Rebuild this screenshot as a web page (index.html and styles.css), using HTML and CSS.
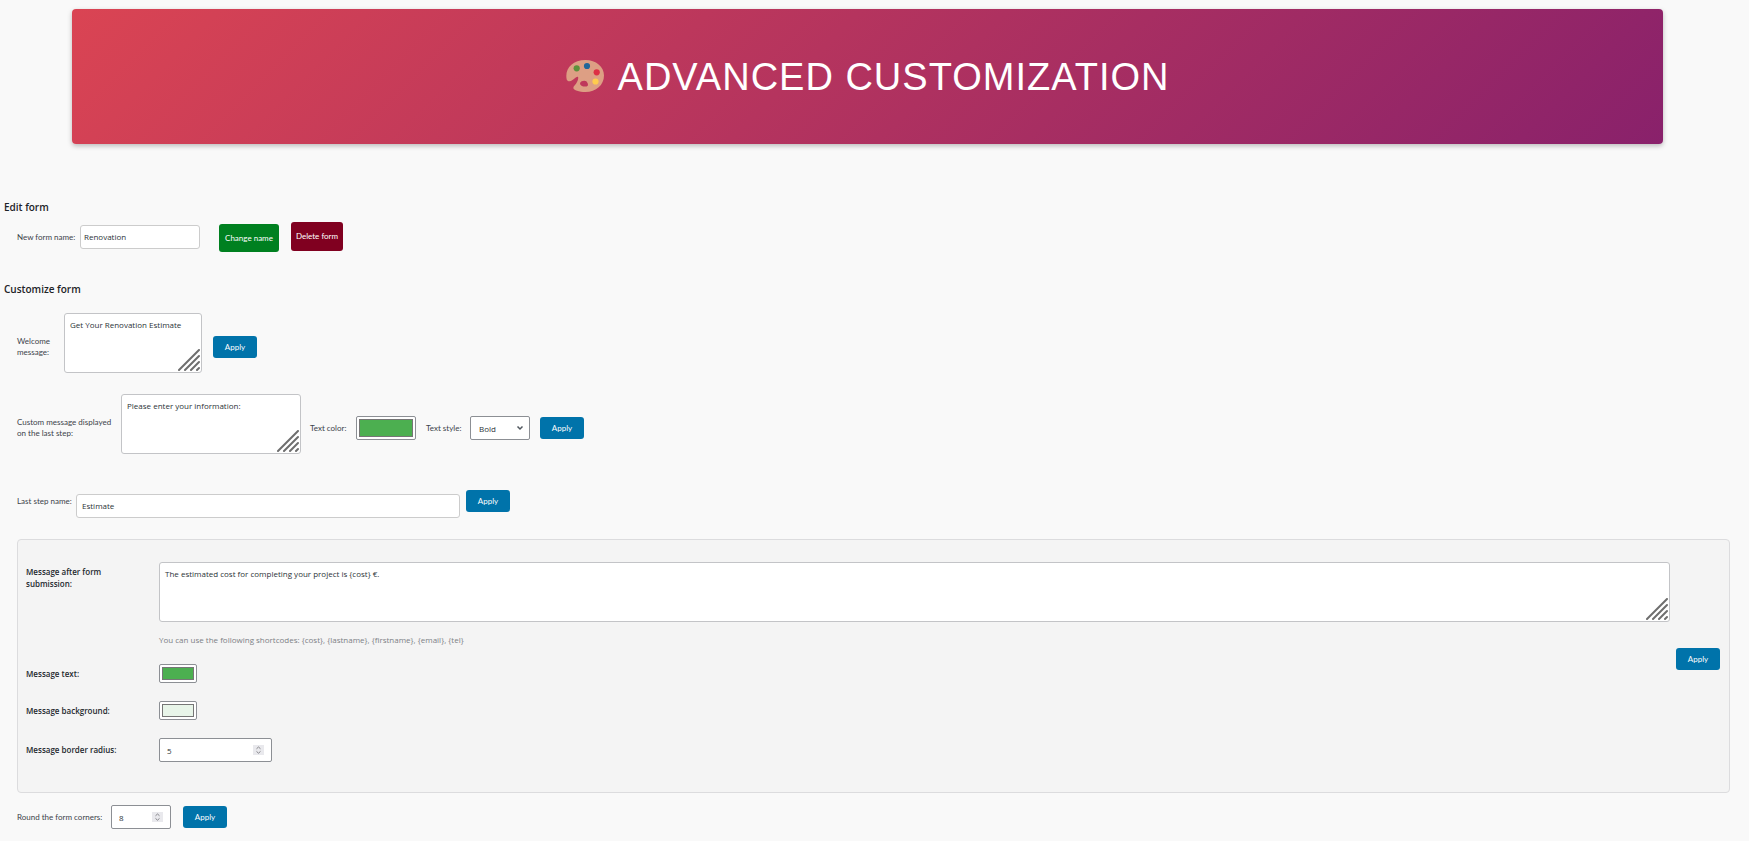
FILE: index.html
```html
<!DOCTYPE html>
<html lang="en">

<head>
    <meta charset="UTF-8">
    <meta name="viewport" content="width=device-width, initial-scale=1.0">
    <title>Advanced customization</title>
    <link rel="stylesheet" href="styles.css">
</head>

<body>
<svg class="defs" aria-hidden="true">
    <symbol id="grip" viewBox="0 0 22 22">
        <path d="M1 21 21 1M7 21 21 7M13 21 21 13M19 21 21 19" stroke="#6e6e6e" stroke-width="2" stroke-linecap="round" />
    </symbol>
    <symbol id="spin" viewBox="0 0 11 10">
        <rect width="11" height="10" fill="#e9e9ed" />
        <path d="M3.5 3.8 5.5 2 7.5 3.8M3.5 6.4 5.5 8.2 7.5 6.4" fill="none" stroke="#85858a" />
    </symbol>
</svg>

<header class="banner">
    <svg class="palette" viewBox="0 0 38 32" aria-hidden="true">
        <path fill="#dd9f84" d="M19.500 0C30 0 38 6.500 38 15.500 38 25 30 32 19.500 32 13 32 7.500 30 7.300 28 7.200 26 10 24.500 11 22 12 20 12.500 18 12 16.800 11 16.500 8.500 18.500 6.500 20 4 22 1.500 21.500.700 19.500-1.500 9 6 0 19.500 0ZM18.500 20.800C15.800 20.800 14 22 14 23.500 14 25.500 16.800 26.800 19.500 26.600 22 26.500 22.500 24.800 21.500 23 20.800 21.600 20 20.900 18.500 20.800Z" />
        <circle cx="10.700" cy="8.300" r="3.100" fill="#5c913b" />
        <circle cx="21" cy="6" r="3.100" fill="#226699" />
        <circle cx="30.700" cy="12.300" r="3.100" fill="#dd2e44" />
        <circle cx="29.500" cy="21.500" r="3.100" fill="#ffcc4d" />
    </svg>
    <h1>ADVANCED CUSTOMIZATION</h1>
</header>

<main>
    <h2>Edit form</h2>
    <form class="row row-name">
        <label for="form-name">New form name:</label>
        <input type="text" id="form-name" class="name" value="Renovation">
        <button type="button" class="btn change">Change name</button>
        <button type="button" class="btn delete">Delete form</button>
    </form>

    <h2>Customize form</h2>
    <form class="row row-welcome">
        <label for="welcome">Welcome<br>message:</label>
        <div class="area">
            <textarea id="welcome">Get Your Renovation Estimate</textarea>
            <svg class="grip"><use href="#grip" /></svg>
        </div>
        <button type="button" class="btn">Apply</button>
    </form>

    <form class="row row-custom">
        <label for="custom">Custom message displayed<br>on the last step:</label>
        <div class="area">
            <textarea id="custom">Please enter your information:</textarea>
            <svg class="grip"><use href="#grip" /></svg>
        </div>
        <label for="text-color" class="color-label">Text color:</label>
        <input type="color" id="text-color" value="#4caf50">
        <label for="text-style" class="style-label">Text style:</label>
        <div class="select">
            <select id="text-style">
                <option>Normal</option>
                <option selected>Bold</option>
                <option>Italic</option>
            </select>
            <svg class="chevron" viewBox="0 0 8 6"><path d="M1.500 1.500 4 4 6.500 1.500" fill="none" stroke="#50575e" stroke-width="1.500" /></svg>
        </div>
        <button type="button" class="btn">Apply</button>
    </form>

    <form class="row row-step">
        <label for="step">Last step name:</label>
        <input type="text" id="step" class="step" value="Estimate">
        <button type="button" class="btn">Apply</button>
    </form>

    <form class="panel">
        <div class="fields">
            <label for="after" class="top">Message after form<br>submission:</label>
            <div>
                <div class="area">
                    <textarea id="after">The estimated cost for completing your project is {cost} €.</textarea>
                    <svg class="grip"><use href="#grip" /></svg>
                </div>
                <p class="hint">You can use the following shortcodes: {cost}, {lastname}, {firstname}, {email}, {tel}</p>
            </div>
            <label for="msg-text">Message text:</label>
            <input type="color" id="msg-text" class="small" value="#4caf50">
            <label for="msg-bg">Message background:</label>
            <input type="color" id="msg-bg" class="small" value="#e8f5e9">
            <label for="msg-radius">Message border radius:</label>
            <div class="number wide">
                <input type="number" id="msg-radius" value="5">
                <svg class="spin"><use href="#spin" /></svg>
            </div>
        </div>
        <button type="button" class="btn">Apply</button>
    </form>

    <form class="row row-round">
        <label for="corners">Round the form corners:</label>
        <div class="number">
            <input type="number" id="corners" value="8">
            <svg class="spin"><use href="#spin" /></svg>
        </div>
        <button type="button" class="btn">Apply</button>
    </form>
</main>
</body>

</html>
```

FILE: styles.css
```css
* {
    box-sizing: border-box;
}

body {
    margin: 0;
    background-color: #f9f9f9;
    color: #3c434a;
    font-family: "Open Sans", "Noto Sans", sans-serif;
    font-size: 8px;
    line-height: 11px;
}

.defs {
    display: none;
}

/* banner */
.banner {
    display: flex;
    justify-content: center;
    gap: 14px;
    height: 135px;
    margin: 9px 86px 56px 72px;
    padding-top: 45px;
    border-radius: 4px;
    background: linear-gradient(135deg, #da4453, #89216b);
    box-shadow: 0 2px 5px rgba(0, 0, 0, .25);
}

.palette {
    width: 38px;
    height: 32px;
    margin-top: 6px;
}

h1 {
    margin: 0;
    color: #fff;
    font: 38px/46px "Liberation Sans", Arial, sans-serif;
    letter-spacing: 1px;
}

h2 {
    margin: 0 0 0 4px;
    padding-bottom: 2px;
    color: #1d2327;
    font-size: 10px;
    font-weight: 600;
    line-height: 14px;
}

/* rows */
.row {
    display: flex;
    align-items: center;
    margin-left: 17px;
}

.row label,
.btn {
    font-family: Lato, "Open Sans", sans-serif;
}

.row-name {
    height: 30px;
    margin-top: 6px;
    margin-bottom: 30px;
}

.row-name label {
    width: 63px;
}

.row-welcome {
    margin-top: 15px;
}

.row-welcome label {
    width: 47px;
}

.row-welcome .area {
    width: 138px;
    margin-right: 11px;
}

/* captions and controls sit a little under the middle of the text area */
.row-welcome > :not(.area),
.row-custom > :not(.area) {
    margin-top: 8px;
}

.row-custom {
    margin-top: 21px;
}

.row-custom .area {
    width: 180px;
    margin: 0 9px 0 11px;
}

.row-custom label:first-child {
    width: 93px;
    white-space: nowrap;
}

.color-label {
    width: 46px;
}

.style-label {
    width: 44px;
    margin-left: 10px;
}

.row-custom .btn {
    margin-left: 10px;
}

.row-step {
    align-items: flex-start;
    margin-top: 36px;
}

.row-step label {
    width: 59px;
    padding-top: 6px;
}

.row-round {
    margin-top: 12px;
    margin-bottom: 12px;
}

.row-round label {
    width: 94px;
}

.row-round .btn {
    margin-left: 12px;
}

/* controls */
input,
select,
textarea,
button {
    margin: 0;
    color: #2c3338;
    font: inherit;
}

input,
select {
    height: 24px;
    border: 1px solid #8c8f94;
    border-radius: 2px;
    background-color: #fff;
}

input[type=text] {
    padding: 0 3px 2px;
    border-color: #ccc;
    border-radius: 3px;
}

.name {
    width: 120px;
}

input.step {
    width: 384px;
    margin: 4px 6px 0 0;
    padding-left: 5px;
}

textarea {
    display: block;
    width: 100%;
    height: 60px;
    padding: 5px;
    border: 1px solid #c3c4c7;
    border-radius: 3px;
    background-color: #fff;
    resize: none;
}

.area,
.select,
.number {
    position: relative;
}

.grip {
    position: absolute;
    right: 2px;
    bottom: 2px;
    width: 22px;
    height: 22px;
    pointer-events: none;
}

input[type=color] {
    width: 60px;
    padding: 2px;
}

input[type=color].small {
    width: 38px;
    height: 19px;
}

::-webkit-color-swatch-wrapper {
    padding: 0;
}

::-webkit-color-swatch {
    border: 1px solid #767676;
    border-radius: 0;
}

select {
    display: block;
    width: 60px;
    padding: 0 8px;
    appearance: none;
}

.chevron {
    position: absolute;
    right: 6px;
    top: 9px;
    width: 8px;
    height: 6px;
    pointer-events: none;
}

.number {
    width: 60px;
}

.number input {
    display: block;
    width: 100%;
    padding: 0 7px;
    appearance: textfield;
}

.number ::-webkit-inner-spin-button {
    display: none;
}

.wide {
    width: 113px;
}

.spin {
    position: absolute;
    top: 7px;
    right: 8px;
    width: 11px;
    height: 10px;
    pointer-events: none;
}

.btn {
    width: 44px;
    height: 22px;
    padding: 0;
    border: 0;
    border-radius: 3px;
    background-color: #0073aa;
    color: #fff;
    cursor: pointer;
}

.change {
    align-self: flex-end;
    width: 60px;
    height: 28px;
    margin: 0 12px 0 19px;
    background-color: #008020;
}

.delete {
    align-self: flex-start;
    width: 52px;
    height: 29px;
    background-color: #800020;
}

/* message panel */
.panel {
    display: flex;
    align-items: center;
    gap: 6px;
    margin: 21px 19px 0 17px;
    padding: 22px 9px 30px 8px;
    border: 1px solid #dcdcde;
    border-radius: 4px;
    background-color: #f4f4f4;
}

.panel .btn {
    margin-bottom: 6px;
}

.fields {
    flex: 1;
    display: grid;
    grid-template-columns: 133px 1fr;
    row-gap: 18px;
    align-items: center;
}

.fields label {
    color: #23282d;
    font-weight: 600;
    line-height: 12px;
}

.fields .top {
    align-self: start;
    padding-top: 4px;
}

.hint {
    margin: 12px 0 0;
    color: #7c8085;
    line-height: 12px;
}
```
